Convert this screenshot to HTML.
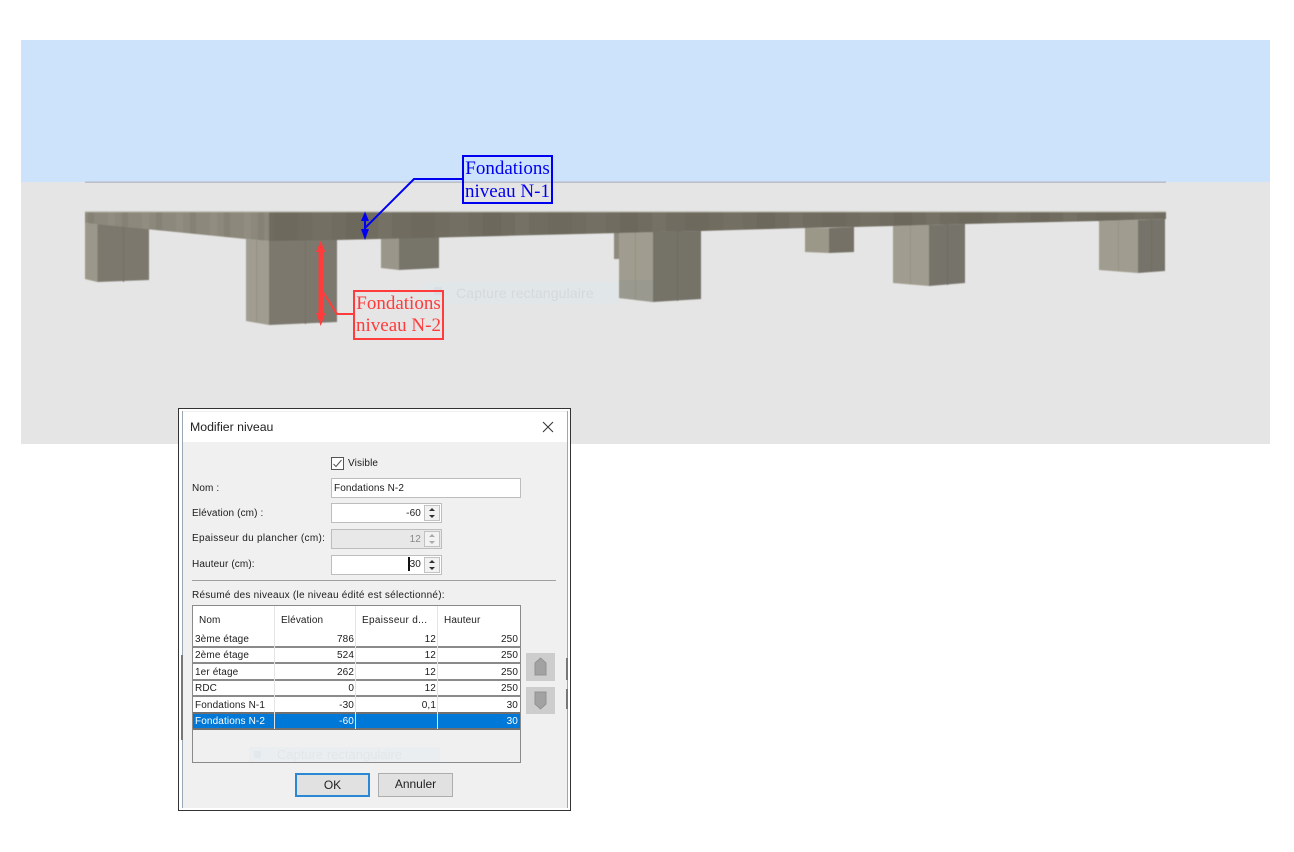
<!DOCTYPE html>
<html lang="fr"><head><meta charset="utf-8"><title>Modifier niveau</title>
<style>
html,body{margin:0;padding:0;background:#fff}
#p{position:relative;width:1294px;height:852px;overflow:hidden;background:#fff;font-family:"Liberation Sans",sans-serif}
.a{position:absolute;box-sizing:border-box}
.t{position:absolute;font-size:10px;line-height:14px;color:#1c1c1c;white-space:nowrap;letter-spacing:.12px;filter:blur(.25px)}
.w{letter-spacing:.3px}
.r{text-align:right}
.box{position:absolute;box-sizing:border-box;border:2px solid;font-family:"Liberation Serif",serif;font-size:19px;text-align:center;white-space:nowrap;background:transparent;filter:blur(.3px)}
.inp{position:absolute;box-sizing:border-box;background:#fff;border:1.500px solid #bdbdbd}
.spin{position:absolute;box-sizing:border-box;width:16px;height:16px;background:#f2f2f2;border:1px solid #c2c2c2}
.spin:before,.spin:after{content:"";position:absolute;left:4px;border-left:3px solid transparent;border-right:3px solid transparent}
.spin:before{top:2px;border-bottom:3px solid #333}
.spin:after{bottom:2px;border-top:3px solid #333}
.dis:before{border-bottom-color:#aaa}.dis:after{border-top-color:#aaa}
.h{position:absolute;background:#8a8a8a;height:2px;left:193px;width:327px}
.v{position:absolute;width:1px;background:#e4e4e4}
.btn{position:absolute;box-sizing:border-box;background:#e1e1e1;text-align:center;font-size:12px;color:#222;line-height:21px}
</style></head><body><div id="p">
<div class="a" style="left:21px;top:40px;width:1249px;height:142px;background:#cce3fb"></div>
<div class="a" style="left:21px;top:182px;width:1249px;height:262px;background:#e5e5e5"></div>
<div class="a" style="left:424px;top:282px;width:196px;height:22px;background:#e1e6e9"></div>
<div class="a" style="left:434px;top:287px;width:8px;height:8px;background:#d9e0e5"></div>
<div class="t" style="left:456px;top:284px;font-size:14px;line-height:18px;color:#d5d9dc;letter-spacing:.15px">Capture rectangulaire</div>

<svg class="a" style="left:0;top:0" width="1294" height="852" viewBox="0 0 1294 852">
<defs>
<pattern id="s1" width="137" height="40" patternUnits="userSpaceOnUse">
<rect width="137" height="40" fill="#706c60"/>
<rect x="0" width="24" height="40" fill="#6d695d"/><rect x="38" width="20" height="40" fill="#737063"/>
<rect x="72" width="18" height="40" fill="#6c685c"/><rect x="104" width="14" height="40" fill="#747165"/>
</pattern>
<pattern id="s2" width="34" height="40" patternUnits="userSpaceOnUse">
<rect width="34" height="40" fill="#8c887b"/><rect x="6" width="7" height="40" fill="#918d80"/>
<rect x="20" width="6" height="40" fill="#858174"/>
</pattern>
<filter id="b" x="-2%" y="-5%" width="104%" height="110%"><feGaussianBlur stdDeviation=".45"/></filter>
</defs>
<rect x="85" y="181.5" width="1081" height="1.4" fill="#b8bbc3"/>
<g filter="url(#b)">
<rect x="614" y="233" width="8" height="26" fill="#8d897d"/>
<polygon points="85,223 97.5,224 97.5,282 85,279" fill="#9b978a"/>
<polygon points="97.5,224 149,229 149,280 97.5,282" fill="#7b786d"/>
<rect x="123" y="226" width="1" height="56" fill="#737066"/>
<polygon points="381,238 399,238 399,270 381,268" fill="#9a9689"/>
<polygon points="399,238 439,237 439,268 399,270" fill="#77746a"/>
<polygon points="619,233 653,232 653,302 619,298" fill="#a09c8f"/>
<polygon points="619,280 653,280 653,302 619,298" fill="#99998f"/>
<polygon points="653,232 701,231 701,299 653,302" fill="#757268"/>
<rect x="677" y="231" width="1" height="70" fill="#6f6c62"/>
<rect x="635" y="232" width="1" height="68" fill="#959282"/>
<polygon points="805,228 829,228 829,253 805,252" fill="#9b9789"/>
<polygon points="829,228 854,227 854,252 829,253" fill="#747166"/>
<polygon points="893,226 929,225 929,286 893,283" fill="#a09c8f"/>
<polygon points="929,225 965,224 965,283 929,286" fill="#76736a"/>
<rect x="910" y="226" width="1" height="58" fill="#959285"/><rect x="947" y="225" width="1" height="60" fill="#706d63"/>
<polygon points="1099,221 1138,220 1138,273 1099,270" fill="#a09c8f"/>
<polygon points="1138,220 1165,219 1165,271 1138,273" fill="#76736a"/>
<rect x="1118" y="221" width="1" height="50" fill="#959285"/><rect x="1151" y="220" width="1" height="52" fill="#706d63"/>
<polygon points="246,239 269,241 269,325 246,321" fill="#a09c90"/>
<rect x="256" y="240" width="1" height="82" fill="#938f82"/>
<polygon points="269,240 337,240 337,322 269,325" fill="#7b786e"/>
<rect x="305" y="240" width="1" height="84" fill="#737066"/>
<polygon points="85,212 269,212 269,241 246,239 85,223" fill="url(#s2)"/>
<polygon points="269,212 1166,212 1166,219 1099,221 965,224 893,226 854,227 805,228 701,231 620,233 337,240 269,241" fill="url(#s1)"/>
<rect x="85" y="211.3" width="1081" height="1" fill="#bdbab0"/>
</g>
<polyline points="463,179 414,179 365,228" fill="none" stroke="#0000f0" stroke-width="2"/>
<rect x="364" y="219" width="2" height="12" fill="#0000f0"/>
<polygon points="365,211.5 361,221 369,221" fill="#0000f0"/>
<polygon points="365,240 361,229 369,229" fill="#0000f0"/>
<polyline points="353,314 337,314 321,289" fill="none" stroke="#ff3b3b" stroke-width="2"/>
<rect x="318.500" y="250" width="4.500" height="64" fill="#ff3b3b"/>
<polygon points="320.700,241 316,252 325.400,252" fill="#ff3b3b"/>
<polygon points="320.700,326 316,313 325.400,313" fill="#ff3b3b"/>
</svg>

<div class="box" style="left:462px;top:155px;width:91px;height:49px;border-color:#0000f0;color:#0000f0;line-height:23px;padding-top:0">Fondations<br>niveau N-1</div>
<div class="box" style="left:353px;top:290px;width:91px;height:50px;border-color:#ff3b3b;color:#ff3b3b;line-height:22px;padding-top:1px">Fondations<br>niveau N-2</div>

<div class="a" style="left:178px;top:408px;width:393px;height:403px;background:#fff;border:1px solid #333"></div>
<div class="a" style="left:182px;top:411px;width:386px;height:397px;background:#f0f0f0;border-left:1px solid #9aa7b5;border-right:1px solid #9aa7b5"></div>
<div class="a" style="left:183px;top:412px;width:384px;height:30px;background:#fff"></div>
<div class="a" style="left:181px;top:655px;width:1.500px;height:85px;background:#777"></div>
<div class="a" style="left:566px;top:658px;width:2px;height:22px;background:#777"></div>
<div class="a" style="left:566px;top:689px;width:2px;height:20px;background:#777"></div>
<div class="t" style="left:190px;top:420px;font-size:12.300px;color:#222;letter-spacing:0">Modifier niveau</div>
<svg class="a" style="left:542px;top:421px" width="12" height="12"><path d="M1 1L11 11M11 1L1 11" stroke="#333" stroke-width="1" fill="none"/></svg>

<div class="a" style="left:331px;top:457px;width:13px;height:13px;background:#fff;border:1px solid #555"></div>
<svg class="a" style="left:331px;top:457px" width="13" height="13"><path d="M2.500 7L5 9.500L10.500 3" stroke="#555" stroke-width="1" fill="none"/></svg>
<div class="t" style="left:348px;top:457px">Visible</div>

<div class="t" style="left:192px;top:482px">Nom :</div>
<div class="inp" style="left:331px;top:478px;width:190px;height:20px"></div>
<div class="t" style="left:334px;top:482px">Fondations N-2</div>

<div class="t" style="left:192px;top:507px">Elévation (cm) :</div>
<div class="inp" style="left:331px;top:503px;width:111px;height:20px"></div>
<div class="t r" style="left:380px;top:507px;width:41px">-60</div>
<div class="spin" style="left:424px;top:505px"></div>

<div class="t w" style="left:192px;top:532px">Epaisseur du plancher (cm):</div>
<div class="inp" style="left:331px;top:529px;width:111px;height:20px;background:#e8e8e8"></div>
<div class="t r" style="left:380px;top:533px;width:41px;color:#888">12</div>
<div class="spin dis" style="left:424px;top:531px"></div>

<div class="t" style="left:192px;top:558px">Hauteur (cm):</div>
<div class="inp" style="left:331px;top:555px;width:111px;height:20px"></div>
<div class="t r" style="left:380px;top:558px;width:41px">30</div>
<div class="a" style="left:408px;top:557px;width:1.500px;height:14px;background:#111"></div>
<div class="spin" style="left:424px;top:557px"></div>

<div class="a" style="left:192px;top:580px;width:364px;height:1px;background:#a0a0a0"></div>
<div class="t w" style="left:192px;top:589px;letter-spacing:.25px">Résumé des niveaux (le niveau édité est sélectionné):</div>

<div class="a" style="left:192px;top:605px;width:329px;height:158px;background:#f0f0f0;border:1px solid #8a8a8a"></div>
<div class="a" style="left:193px;top:606px;width:327px;height:107px;background:#fff"></div>
<div class="a" style="left:193px;top:713px;width:327px;height:16px;background:#0078d7"></div>
<div class="a" style="left:249px;top:747px;width:191px;height:15px;background:#ebeef0"></div>
<div class="a" style="left:254px;top:751px;width:7px;height:7px;background:#e3e8ec"></div>
<div class="t" style="left:277px;top:747px;font-size:13px;line-height:15px;color:#e3e6e8;letter-spacing:0;height:15px;overflow:hidden">Capture rectangulaire</div>
<div class="h" style="top:646px"></div><div class="h" style="top:662px"></div><div class="h" style="top:679px"></div><div class="h" style="top:695px"></div><div class="h" style="top:712px;background:#707070"></div><div class="h" style="top:728px;background:#707070"></div>
<div class="v" style="left:274px;top:606px;height:123px"></div><div class="v" style="left:355px;top:606px;height:123px"></div><div class="v" style="left:437px;top:606px;height:123px"></div>
<div class="t" style="left:199px;top:614px">Nom</div><div class="t" style="left:281px;top:614px">Elévation</div><div class="t w" style="left:362px;top:614px">Epaisseur d...</div><div class="t" style="left:444px;top:614px">Hauteur</div>

<div class="t" style="left:195px;top:633px">3ème étage</div><div class="t r" style="left:300px;top:633px;width:54px">786</div><div class="t r" style="left:380px;top:633px;width:56px">12</div><div class="t r" style="left:460px;top:633px;width:58px">250</div>
<div class="t" style="left:195px;top:649px">2ème étage</div><div class="t r" style="left:300px;top:649px;width:54px">524</div><div class="t r" style="left:380px;top:649px;width:56px">12</div><div class="t r" style="left:460px;top:649px;width:58px">250</div>
<div class="t" style="left:195px;top:666px">1er étage</div><div class="t r" style="left:300px;top:666px;width:54px">262</div><div class="t r" style="left:380px;top:666px;width:56px">12</div><div class="t r" style="left:460px;top:666px;width:58px">250</div>
<div class="t" style="left:195px;top:682px">RDC</div><div class="t r" style="left:300px;top:682px;width:54px">0</div><div class="t r" style="left:380px;top:682px;width:56px">12</div><div class="t r" style="left:460px;top:682px;width:58px">250</div>
<div class="t" style="left:195px;top:699px">Fondations N-1</div><div class="t r" style="left:300px;top:699px;width:54px">-30</div><div class="t r" style="left:380px;top:699px;width:56px">0,1</div><div class="t r" style="left:460px;top:699px;width:58px">30</div>
<div class="t" style="left:195px;top:715px;color:#fff">Fondations N-2</div><div class="t r" style="left:300px;top:715px;width:54px;color:#fff">-60</div><div class="t r" style="left:460px;top:715px;width:58px;color:#fff">30</div>

<div class="a" style="left:526px;top:653px;width:29px;height:28px;background:#cdcdcd"></div>
<div class="a" style="left:526px;top:687px;width:29px;height:27px;background:#cdcdcd"></div>
<svg class="a" style="left:526px;top:653px" width="29" height="62" viewBox="0 0 29 62">
<path d="M9 10L14.500 5L20 10V22H9Z" fill="#a2a2a2" stroke="#929292"/>
<path d="M9 39H20V51L14.500 56L9 51Z" fill="#a2a2a2" stroke="#929292"/>
</svg>

<div class="btn" style="left:295px;top:773px;width:75px;height:24px;border:2px solid #2a88d4;line-height:20px">OK</div>
<div class="btn" style="left:378px;top:773px;width:75px;height:24px;border:1px solid #adadad">Annuler</div>
</div></body></html>
